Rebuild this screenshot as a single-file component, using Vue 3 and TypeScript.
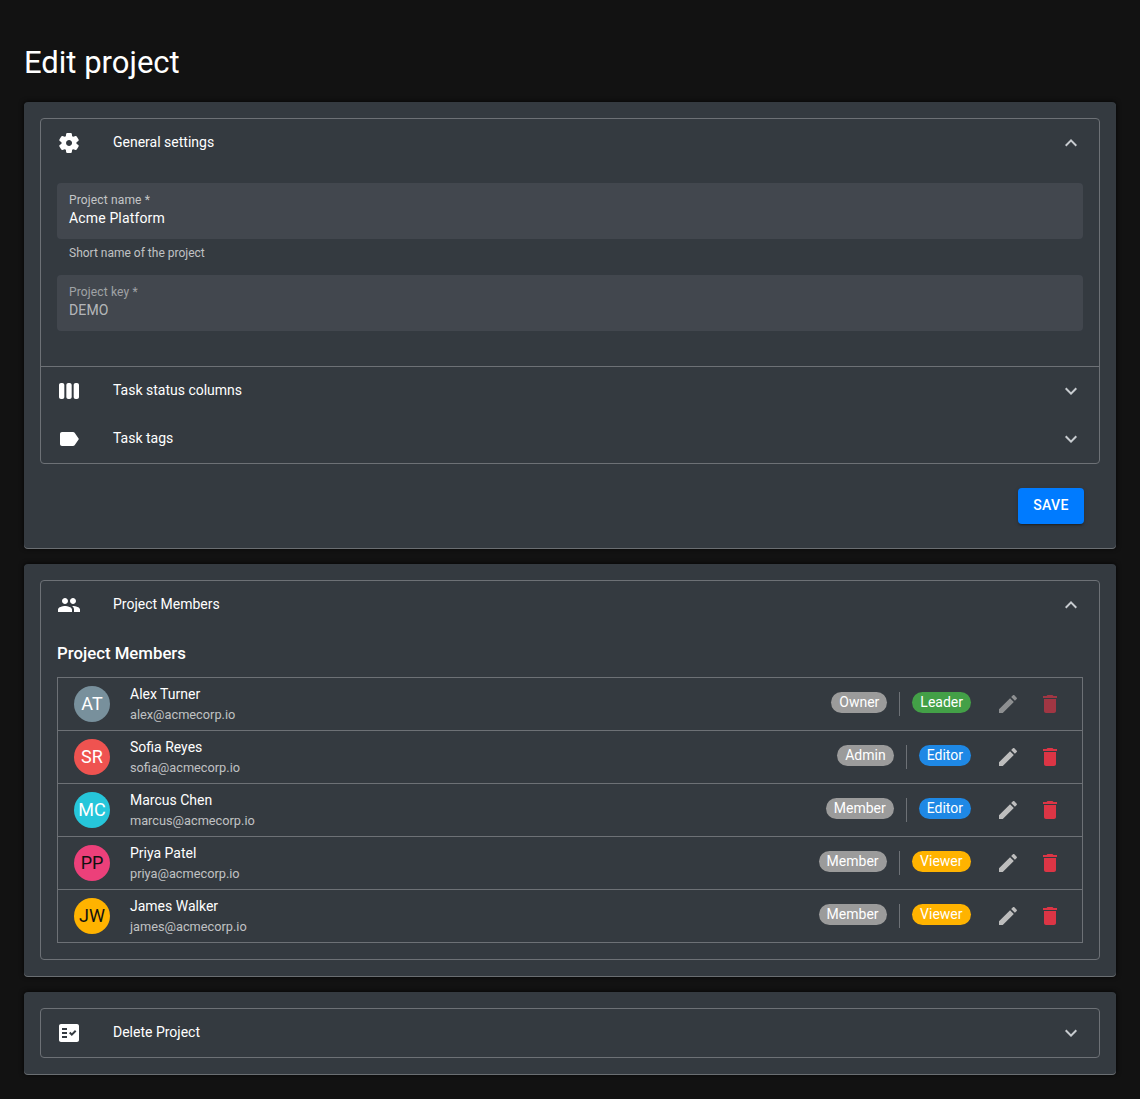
<script setup lang="ts">
interface Member {
  initials: string
  name: string
  email: string
  color: string
  initialsColor: string
  role: string
  access: string
  accessClass: string
  disabled?: boolean
}

const members: Member[] = [
  { initials: 'AT', name: 'Alex Turner', email: 'alex@acmecorp.io', color: '#78909c', initialsColor: '#fff', role: 'Owner', access: 'Leader', accessClass: 'leader', disabled: true },
  { initials: 'SR', name: 'Sofia Reyes', email: 'sofia@acmecorp.io', color: '#ef5350', initialsColor: '#fff', role: 'Admin', access: 'Editor', accessClass: 'editor' },
  { initials: 'MC', name: 'Marcus Chen', email: 'marcus@acmecorp.io', color: '#26c6da', initialsColor: '#fff', role: 'Member', access: 'Editor', accessClass: 'editor' },
  { initials: 'PP', name: 'Priya Patel', email: 'priya@acmecorp.io', color: '#ec407a', initialsColor: '#111', role: 'Member', access: 'Viewer', accessClass: 'viewer' },
  { initials: 'JW', name: 'James Walker', email: 'james@acmecorp.io', color: '#ffb300', initialsColor: '#111', role: 'Member', access: 'Viewer', accessClass: 'viewer' }
]
</script>

<template>
  <main class="page">
    <h1 class="title">Edit project</h1>

    <section class="paper">
      <div class="accordion">
        <div class="header">
          <svg class="icon" viewBox="0 0 24 24"><path d="M19.5 12c0-.23-.01-.45-.03-.68l1.86-1.41c.4-.3.51-.86.26-1.3l-1.87-3.23c-.25-.44-.79-.62-1.25-.42l-2.15.91c-.37-.26-.76-.49-1.17-.68l-.29-2.31c-.06-.5-.49-.88-.99-.88h-3.73c-.51 0-.94.38-1 .88l-.29 2.31c-.41.19-.8.42-1.17.68l-2.15-.91c-.46-.2-1-.02-1.25.42L2.41 8.62c-.25.44-.14.99.26 1.3l1.86 1.41c-.02.22-.03.44-.03.67s.01.45.03.68l-1.86 1.41c-.4.3-.51.86-.26 1.3l1.87 3.23c.25.44.79.62 1.25.42l2.15-.91c.37.26.76.49 1.17.68l.29 2.31c.06.5.49.88.99.88h3.73c.5 0 .93-.38.99-.88l.29-2.31c.41-.19.8-.42 1.17-.68l2.15.91c.46.2 1 .02 1.25-.42l1.87-3.23c.25-.44.14-.99-.26-1.3l-1.86-1.41c.03-.23.04-.45.04-.68zm-7.46 3c-1.65 0-3-1.35-3-3s1.35-3 3-3 3 1.35 3 3-1.35 3-3 3z" /></svg>
          <span class="header-label">General settings</span>
          <svg class="chevron" viewBox="0 0 24 24"><path d="M12 8l-6 6 1.41 1.41L12 10.83l4.59 4.58L18 14z" /></svg>
        </div>
        <div class="general-body">
          <div class="field">
            <span class="field-label">Project name *</span>
            <span class="field-value">Acme Platform</span>
          </div>
          <p class="helper">Short name of the project</p>
          <div class="field disabled">
            <span class="field-label">Project key *</span>
            <span class="field-value">DEMO</span>
          </div>
        </div>
        <div class="header ruled">
          <svg class="icon" viewBox="0 0 24 24"><path d="M5.33 20H4c-1.1 0-2-.9-2-2V6c0-1.1.9-2 2-2h1.33c1.1 0 2 .9 2 2v12c0 1.1-.9 2-2 2zM22 18V6c0-1.1-.9-2-2-2h-1.33c-1.1 0-2 .9-2 2v12c0 1.1.9 2 2 2H20c1.1 0 2-.9 2-2zm-7.33 0V6c0-1.1-.9-2-2-2h-1.33c-1.1 0-2 .9-2 2v12c0 1.1.9 2 2 2h1.33c1.1 0 2-.9 2-2z" /></svg>
          <span class="header-label">Task status columns</span>
          <svg class="chevron" viewBox="0 0 24 24"><path d="M16.59 8.59L12 13.17 7.41 8.59 6 10l6 6 6-6z" /></svg>
        </div>
        <div class="header">
          <svg class="icon" viewBox="0 0 24 24"><path d="M17.63 5.84C17.27 5.33 16.67 5 16 5L5 5.01C3.9 5.01 3 5.9 3 7v10c0 1.1.9 1.99 2 1.99L16 19c.67 0 1.27-.33 1.63-.84l3.96-5.58c.25-.35.25-.81 0-1.16l-3.96-5.58z" /></svg>
          <span class="header-label">Task tags</span>
          <svg class="chevron" viewBox="0 0 24 24"><path d="M16.59 8.59L12 13.17 7.41 8.59 6 10l6 6 6-6z" /></svg>
        </div>
      </div>
      <div class="actions">
        <button class="save" type="button">SAVE</button>
      </div>
    </section>

    <section class="paper">
      <div class="accordion">
        <div class="header">
          <svg class="icon" viewBox="0 0 24 24"><path d="M16 11c1.66 0 2.99-1.34 2.99-3S17.66 5 16 5c-1.66 0-3 1.34-3 3s1.34 3 3 3zm-8 0c1.66 0 2.99-1.34 2.99-3S9.66 5 8 5C6.34 5 5 6.34 5 8s1.34 3 3 3zm0 2c-2.33 0-7 1.17-7 3.5V19h14v-2.5c0-2.33-4.67-3.5-7-3.5zm8 0c-.29 0-.62.02-.97.05 1.16.84 1.97 1.97 1.97 3.45V19h6v-2.5c0-2.33-4.67-3.5-7-3.5z" /></svg>
          <span class="header-label">Project Members</span>
          <svg class="chevron" viewBox="0 0 24 24"><path d="M12 8l-6 6 1.41 1.41L12 10.83l4.59 4.58L18 14z" /></svg>
        </div>
        <div class="members-body">
          <h2 class="members-title">Project Members</h2>
          <ul class="members">
            <li v-for="member in members" :key="member.email" class="member">
              <div class="avatar" :style="{ backgroundColor: member.color, color: member.initialsColor }">{{ member.initials }}</div>
              <div class="identity">
                <span class="name">{{ member.name }}</span>
                <span class="email">{{ member.email }}</span>
              </div>
              <span class="chip role">{{ member.role }}</span>
              <span class="divider"></span>
              <span class="chip" :class="member.accessClass">{{ member.access }}</span>
              <div class="row-actions" :class="{ dimmed: member.disabled }">
                <svg class="edit" viewBox="0 0 24 24"><path d="M3 17.25V21h3.75L17.81 9.94l-3.75-3.75L3 17.25zM20.71 7.04c.39-.39.39-1.02 0-1.41l-2.34-2.34c-.39-.39-1.02-.39-1.41 0l-1.83 1.83 3.75 3.75 1.83-1.83z" /></svg>
                <svg class="trash" viewBox="0 0 24 24"><path d="M6 19c0 1.1.9 2 2 2h8c1.1 0 2-.9 2-2V7H6v12zM19 4h-3.5l-1-1h-5l-1 1H5v2h14V4z" /></svg>
              </div>
            </li>
          </ul>
        </div>
      </div>
    </section>

    <section class="paper">
      <div class="accordion">
        <div class="header">
          <svg class="icon" viewBox="0 0 24 24"><path d="M20 3H4c-1.1 0-2 .9-2 2v14c0 1.1.9 2 2 2h16c1.1 0 2-.9 2-2V5c0-1.1-.9-2-2-2zM10 17H5v-2h5v2zm0-4H5v-2h5v2zm0-4H5V7h5v2zm4.82 6L12 12.16l1.41-1.41 1.41 1.42L17.99 9l1.42 1.42L14.82 15z" /></svg>
          <span class="header-label">Delete Project</span>
          <svg class="chevron" viewBox="0 0 24 24"><path d="M16.59 8.59L12 13.17 7.41 8.59 6 10l6 6 6-6z" /></svg>
        </div>
      </div>
    </section>
  </main>
</template>

<style>
html,
body {
  margin: 0;
  background: #121212;
}
</style>

<style scoped>
.page {
  box-sizing: border-box;
  width: 1140px;
  height: 1099px;
  padding: 42px 24px 0;
  overflow: hidden;
  font-family: Roboto, "Liberation Sans", sans-serif;
  color: #fff;
}

.title {
  margin: 0 0 18px;
  font-size: 31px;
  font-weight: 400;
  line-height: 42px;
}

.paper {
  box-sizing: border-box;
  margin-bottom: 16px;
  padding: 16px;
  background: #343a40;
  border-radius: 4px;
  box-shadow: 0 1px 0 #6a6e72, 0 0 5px rgba(0, 0, 0, 0.9);
}

.accordion {
  border: 1px solid #6d7176;
  border-radius: 4px;
}

.header {
  display: flex;
  align-items: center;
  height: 48px;
  padding: 0 16px;
}

.ruled {
  border-top: 1px solid #6d7176;
}

.icon {
  flex: none;
  width: 24px;
  height: 24px;
  fill: #fff;
}

.header-label {
  flex: 1;
  margin-bottom: 2px;
  margin-left: 32px;
  font-size: 14px;
  line-height: 20px;
}

.chevron {
  flex: none;
  width: 24px;
  height: 24px;
  fill: #c8ccd0;
}

.general-body {
  padding: 16px 16px 35px;
}

.field {
  box-sizing: border-box;
  display: flex;
  flex-direction: column;
  height: 56px;
  padding: 9px 12px 0;
  background: #42474e;
  border-radius: 4px;
}

.field-label {
  font-size: 12px;
  line-height: 16px;
  letter-spacing: 0.15px;
  color: rgba(255, 255, 255, 0.7);
}

.field-value {
  font-size: 14px;
  line-height: 20px;
  letter-spacing: 0.15px;
  color: #fff;
}

.disabled .field-label {
  color: rgba(255, 255, 255, 0.5);
}

.disabled .field-value {
  color: rgba(255, 255, 255, 0.62);
}

.helper {
  margin: 6px 12px 14px;
  font-size: 12px;
  line-height: 16px;
  color: rgba(255, 255, 255, 0.7);
}

.actions {
  display: flex;
  justify-content: flex-end;
  padding: 24px 16px 8px;
}

.save {
  width: 66px;
  height: 36px;
  padding: 0 0 2px;
  border: 0;
  border-radius: 4px;
  background: #007bff;
  color: #fff;
  font-family: inherit;
  font-size: 14px;
  font-weight: 500;
  letter-spacing: 0.4px;
  box-shadow: 0 3px 1px -2px rgba(0, 0, 0, 0.2), 0 2px 2px rgba(0, 0, 0, 0.14), 0 1px 5px rgba(0, 0, 0, 0.12);
}

.members-body {
  padding: 0 16px 16px;
}

.members-title {
  margin: 0 0 12px;
  padding-top: 12px;
  font-size: 16.8px;
  font-weight: 500;
  line-height: 24px;
}

.members {
  margin: 0;
  padding: 0;
  list-style: none;
  border: 1px solid #6d7176;
  border-bottom: 0;
}

.member {
  box-sizing: border-box;
  display: flex;
  align-items: center;
  height: 53px;
  padding: 0 16px;
  border-bottom: 1px solid #6d7176;
}

.avatar {
  box-sizing: border-box;
  display: flex;
  flex: none;
  align-items: center;
  justify-content: center;
  width: 36px;
  height: 36px;
  padding-bottom: 2px;
  border-radius: 50%;
  font-size: 18px;
}

.identity {
  display: flex;
  flex: 1;
  flex-direction: column;
  margin-left: 20px;
}

.name {
  font-size: 14px;
  line-height: 20px;
}

.email {
  margin-top: 2px;
  font-size: 12.75px;
  line-height: 18px;
  color: rgba(255, 255, 255, 0.7);
}

.chip {
  flex: none;
  height: 21px;
  margin-bottom: 3px;
  padding: 0 8px;
  border-radius: 11px;
  font-size: 14px;
  line-height: 20px;
  color: #fff;
}

.role {
  background: #9b9b9b;
}

.leader {
  background: #43a047;
}

.editor {
  background: #1e88e5;
}

.viewer {
  padding: 0 8.5px;
  background: #ffb300;
}

.divider {
  flex: none;
  width: 1px;
  height: 24px;
  margin: 0 12px;
  background: #6d7176;
}

.row-actions {
  display: flex;
  flex: none;
  align-items: center;
  gap: 18px;
  margin-left: 25px;
  margin-right: 4px;
}

.row-actions svg {
  width: 24px;
  height: 24px;
}

.edit {
  fill: #bdbdbd;
}

.trash {
  fill: #dc3545;
}

.dimmed svg {
  opacity: 0.65;
}
</style>
